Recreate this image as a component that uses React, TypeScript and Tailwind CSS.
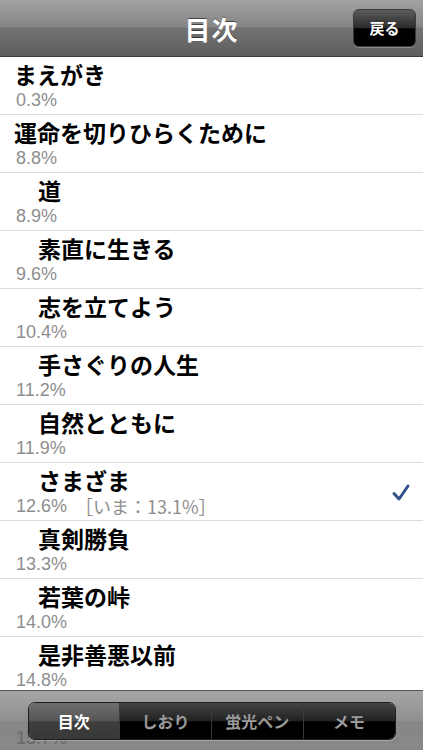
import React from "react";

const rows: { t: string; p: string; indent: boolean; extra?: string; check?: boolean }[] = [
  { t: "まえがき", p: "0.3%", indent: false },
  { t: "運命を切りひらくために", p: "8.8%", indent: false },
  { t: "道", p: "8.9%", indent: true },
  { t: "素直に生きる", p: "9.6%", indent: true },
  { t: "志を立てよう", p: "10.4%", indent: true },
  { t: "手さぐりの人生", p: "11.2%", indent: true },
  { t: "自然とともに", p: "11.9%", indent: true },
  { t: "さまざま", p: "12.6%", indent: true, extra: "［いま：13.1%］", check: true },
  { t: "真剣勝負", p: "13.3%", indent: true },
  { t: "若葉の峠", p: "14.0%", indent: true },
  { t: "是非善悪以前", p: "14.8%", indent: true },
  { t: "", p: "15.7%", indent: true },
];

const jp = { fontFamily: '"Noto Sans CJK JP", "Noto Sans", sans-serif' };
const num = { fontFamily: '"Liberation Sans", "Noto Sans CJK JP", sans-serif' };

export default function App() {
  return (
    <div className="relative w-[423px] h-[750px] overflow-hidden bg-white" style={jp}>
      {/* Header */}
      <div className="relative h-[57px] flex items-center justify-center border-b border-[#3a3a3a] bg-[linear-gradient(to_bottom,#a2a2a2_0%,#858585_48%,#737373_50%,#5e5e5e_100%)]">
        <span className="text-white text-[26px] font-bold tracking-[1px] [text-shadow:0_-1px_0_rgba(0,0,0,0.5)]">目次</span>
        <div className="absolute right-[7px] top-[9px] w-[63px] h-[38px] rounded-[6px] border border-[#3c3c3c] bg-[linear-gradient(to_bottom,#5c5c5c_0%,#2a2a2a_50%,#000_52%,#000_100%)] shadow-[0_1px_0_rgba(255,255,255,0.25)] flex items-center justify-center">
          <span className="text-white text-[15px] font-bold">戻る</span>
        </div>
      </div>

      {/* List */}
      <div className="flex flex-col">
        {rows.map((r, i) => (
          <div key={i} className="relative h-[58px] border-b border-[#dcdcdc] flex flex-col">
            <div
              className={`${r.indent ? "pl-[38px]" : "pl-[14px]"} pt-[1px] h-[33px] text-[23px] leading-[32px] font-bold text-black`}
            >
              {r.t}
            </div>
            <div className="pl-[16px] text-[18px] leading-[21px] text-[#8e8e8e] flex" style={num}>
              <span>{r.p}</span>
              {r.extra && <span className="ml-[8px]" style={jp}>{r.extra}</span>}
            </div>
            {r.check && (
              <svg className="absolute right-[12px] top-[20px]" width="20" height="20" viewBox="0 0 20 20">
                <path d="M3 10.5 L8 16 L17 3" fill="none" stroke="#34508a" strokeWidth="3" strokeLinecap="round" strokeLinejoin="round" />
              </svg>
            )}
          </div>
        ))}
      </div>

      {/* Toolbar */}
      <div className="absolute left-0 right-0 top-[690px] h-[60px] border-t border-[#555] bg-[linear-gradient(to_bottom,rgba(150,150,150,0.85)_0%,rgba(115,115,115,0.8)_50%,rgba(95,95,95,0.75)_52%,rgba(85,85,85,0.7)_100%)] flex items-center justify-center">
        <div className="w-[368px] h-[38px] rounded-[7px] border border-[#1e1e1e] overflow-hidden flex shadow-[0_1px_0_rgba(255,255,255,0.25)]">
          {["目次", "しおり", "蛍光ペン", "メモ"].map((s, i) => (
            <div
              key={s}
              className={`flex-1 flex items-center justify-center text-[16px] font-bold ${
                i === 0
                  ? "text-white bg-[linear-gradient(to_bottom,#6e6e6e_0%,#555_50%,#3e3e3e_52%,#383838_100%)]"
                  : "text-[#9a9a9a] border-l border-[#3a3a3a] bg-[linear-gradient(to_bottom,#444_0%,#222_50%,#000_52%,#000_100%)]"
              }`}
            >
              {s}
            </div>
          ))}
        </div>
      </div>
    </div>
  );
}
